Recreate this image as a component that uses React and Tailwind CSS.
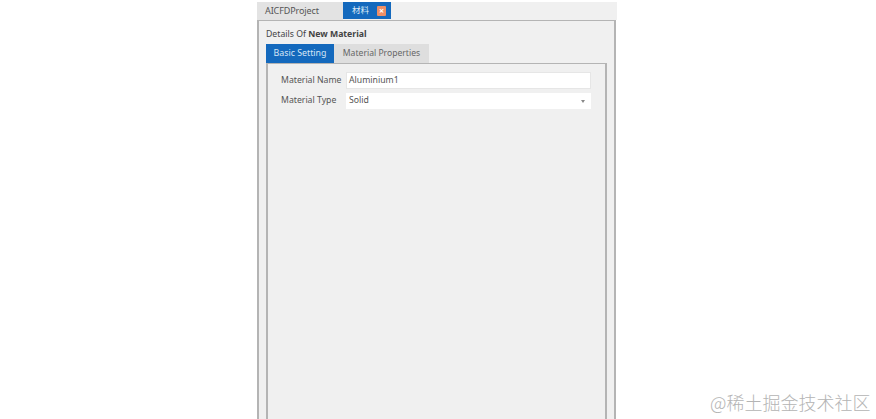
export default function App() {
  const font = { fontFamily: '"Noto Sans", "Noto Sans CJK SC", sans-serif' };
  return (
    <div className="relative h-[419px] w-[876px] overflow-hidden bg-white text-[8.7px] text-[#444]" style={font}>
      <div className="ml-[257px] flex h-[419px] w-[360px] flex-col pt-[2px]">
        <div className="flex h-[18px] items-center bg-[#f0f0f0]">
          <div className="flex h-full w-[86px] shrink-0 items-center bg-[#e3e3e3] pl-[8px] text-[9px] tracking-[-0.1px] whitespace-nowrap text-[#555]">AICFDProject</div>
          <div className="flex h-[17px] w-[48px] shrink-0 items-center self-start bg-[#1469bd] pl-[9px] whitespace-nowrap text-[#dce9f6]">
            <span className="text-[8.5px]">材料</span>
            <span className="ml-[8px] flex h-[10px] w-[9px] shrink-0 items-center justify-center rounded-[1px] bg-[#ef8f66] text-[9px] leading-none font-bold text-white">×</span>
          </div>
        </div>
        <div className="mr-[1px] flex min-h-0 flex-1 flex-col border-t border-r-2 border-l-2 border-[#b4b4b4] bg-[#f0f0f0] pt-[5px] pr-[7px] pl-[7px]">
          <div className="flex h-[16px] items-baseline pt-[1px] leading-[15px] whitespace-nowrap text-[#444]">
            <span>Details Of&nbsp;</span><span className="font-bold">New Material</span>
          </div>
          <div className="mt-[2px] flex h-[19px] items-stretch whitespace-nowrap">
            <div className="flex w-[68px] items-center justify-center bg-[#1469bd] text-[8.8px] text-[#d6e6f6]">Basic Setting</div>
            <div className="flex w-[95px] items-center justify-center bg-[#dedede] text-[8.6px] text-[#666]">Material Properties</div>
          </div>
          <div className="flex min-h-0 flex-1 flex-col gap-[3px] border-t border-r-2 border-l-2 border-[#b4b4b4] pt-[7px] pr-[14px] pl-[13px]">
            <div className="flex h-[18px] items-center">
              <span className="w-[65px] shrink-0 pt-[1px] whitespace-nowrap text-[#555]">Material Name</span>
              <div className="flex h-[17px] flex-1 items-center border border-[#e6e6e6] bg-white pt-[1px] pl-[2px] text-[#555]">Aluminium1</div>
            </div>
            <div className="flex h-[17px] items-center">
              <span className="w-[65px] shrink-0 pt-[1px] whitespace-nowrap text-[#555]">Material Type</span>
              <div className="flex h-[16px] flex-1 items-center justify-between bg-white pt-[1px] pr-[6px] pl-[3px] text-[#555]">
                <span>Solid</span>
                <span className="h-0 w-0 border-t-[3px] border-r-[2.5px] border-l-[2.5px] border-t-[#888] border-r-transparent border-l-transparent"></span>
              </div>
            </div>
          </div>
        </div>
      </div>
      <div className="absolute top-[390px] left-[710px] text-[18px] leading-[24px] font-light whitespace-nowrap text-[#b4b4b4]" style={{ fontFamily: '"Noto Sans CJK SC", sans-serif' }}>@稀土掘金技术社区</div>
    </div>
  );
}
